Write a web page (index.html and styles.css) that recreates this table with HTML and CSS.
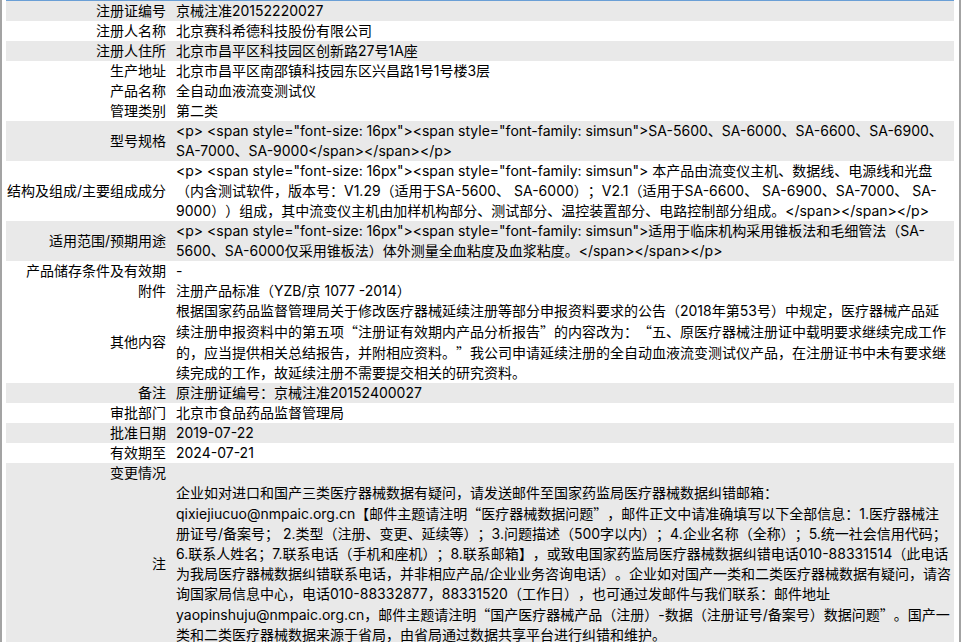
FILE: index.html
```html
<!DOCTYPE html>
<html lang="zh-CN">
<head>
<meta charset="utf-8">
<title>医疗器械注册信息</title>
<link rel="stylesheet" href="styles.css">
</head>
<body>
<div class="frame">
<table class="info">
<tbody>
<tr class="g"><th>注册证编号</th><td>京械注准20152220027</td></tr>
<tr><th>注册人名称</th><td>北京赛科希德科技股份有限公司</td></tr>
<tr class="g"><th>注册人住所</th><td>北京市昌平区科技园区创新路27号1A座</td></tr>
<tr><th>生产地址</th><td>北京市昌平区南邵镇科技园东区兴昌路1号1号楼3层</td></tr>
<tr><th>产品名称</th><td>全自动血液流变测试仪</td></tr>
<tr><th>管理类别</th><td>第二类</td></tr>
<tr class="g"><th>型号规格</th><td>&lt;p&gt; &lt;span style="font-size: 16px"&gt;&lt;span style="font-family: simsun"&gt;SA-5600、SA-6000、SA-6600、SA-6900、<br>SA-7000、SA-9000&lt;/span&gt;&lt;/span&gt;&lt;/p&gt;</td></tr>
<tr><th>结构及组成/主要组成成分</th><td>&lt;p&gt; &lt;span style="font-size: 16px"&gt;&lt;span style="font-family: simsun"&gt; 本产品由流变仪主机、数据线、电源线和光盘<br>（内含测试软件，版本号：V1.29（适用于SA-5600、 SA-6000）；V2.1（适用于SA-6600、 SA-6900、SA-7000、 SA-<br>9000））组成，其中流变仪主机由加样机构部分、测试部分、温控装置部分、电路控制部分组成。&lt;/span&gt;&lt;/span&gt;&lt;/p&gt;</td></tr>
<tr class="g"><th>适用范围/预期用途</th><td>&lt;p&gt; &lt;span style="font-size: 16px"&gt;&lt;span style="font-family: simsun"&gt;适用于临床机构采用锥板法和毛细管法（SA-<br>5600、SA-6000仅采用锥板法）体外测量全血粘度及血浆粘度。&lt;/span&gt;&lt;/span&gt;&lt;/p&gt;</td></tr>
<tr><th>产品储存条件及有效期</th><td>-</td></tr>
<tr><th>附件</th><td>注册产品标准（YZB/京 1077 -2014）</td></tr>
<tr><th>其他内容</th><td>根据国家药品监督管理局关于修改医疗器械延续注册等部分申报资料要求的公告（2018年第53号）中规定，医疗器械产品延<br>续注册申报资料中的第五项<span class="fw">“</span>注册证有效期内产品分析报告<span class="fw">”</span>的内容改为：<span class="fw">“</span>五、原医疗器械注册证中载明要求继续完成工作<br>的，应当提供相关总结报告，并附相应资料。<span class="fw">”</span>我公司申请延续注册的全自动血液流变测试仪产品，在注册证书中未有要求继<br>续完成的工作，故延续注册不需要提交相关的研究资料。</td></tr>
<tr class="g"><th>备注</th><td>原注册证编号：京械注准20152400027</td></tr>
<tr><th>审批部门</th><td>北京市食品药品监督管理局</td></tr>
<tr class="g"><th>批准日期</th><td>2019-07-22</td></tr>
<tr><th>有效期至</th><td>2024-07-21</td></tr>
<tr class="g"><th>变更情况</th><td></td></tr>
<tr class="g"><th>注</th><td>企业如对进口和国产三类医疗器械数据有疑问，请发送邮件至国家药监局医疗器械数据纠错邮箱：<br>qixiejiucuo@nmpaic.org.cn【邮件主题请注明<span class="fw">“</span>医疗器械数据问题<span class="fw">”</span>，邮件正文中请准确填写以下全部信息：1.医疗器械注<br>册证号/备案号； 2.类型（注册、变更、延续等）；3.问题描述（500字以内）；4.企业名称（全称）；5.统一社会信用代码；<br>6.联系人姓名；7.联系电话（手机和座机）；8.联系邮箱】，或致电国家药监局医疗器械数据纠错电话010-88331514（此电话<br>为我局医疗器械数据纠错联系电话，并非相应产品/企业业务咨询电话）。企业如对国产一类和二类医疗器械数据有疑问，请咨<br>询国家局信息中心，电话010-88332877，88331520（工作日），也可通过发邮件与我们联系：邮件地址<br>yaopinshuju@nmpaic.org.cn，邮件主题请注明<span class="fw">“</span>国产医疗器械产品（注册）-数据（注册证号/备案号）数据问题<span class="fw">”</span>。国产一<br>类和二类医疗器械数据来源于省局，由省局通过数据共享平台进行纠错和维护。</td></tr>
</tbody>
</table>
</div>
</body>
</html>
```
FILE: styles.css
```css
html, body {
  margin: 0;
  padding: 0;
  background: #ffffff;
}
body {
  font-family: "Inter", "Noto Sans CJK SC", sans-serif;
  font-size: 14px;
  color: #000000;
  text-spacing-trim: space-all;
}
.frame {
  width: 948px;
  min-height: 642px;
  border-left: 2px solid #a3a3a3;
  border-right: 2px solid #a3a3a3;
  padding: 0 5px 0 4px;
}
.info {
  width: 948px;
  border-collapse: collapse;
  border-top: 1px solid #6a9fd6;
  table-layout: fixed;
}
.info th {
  width: 160px;
  padding: 0 5px 0 0;
  text-align: right;
  font-weight: normal;
  vertical-align: middle;
  line-height: 20px;
  white-space: nowrap;
}
.info td {
  padding: 0 2px 0 5px;
  text-align: left;
  line-height: 20px;
  vertical-align: top;
}
.info tr.g {
  background: #e9e9e9;
}
.fw {
  font-family: "Noto Sans CJK SC", sans-serif;
}
```
